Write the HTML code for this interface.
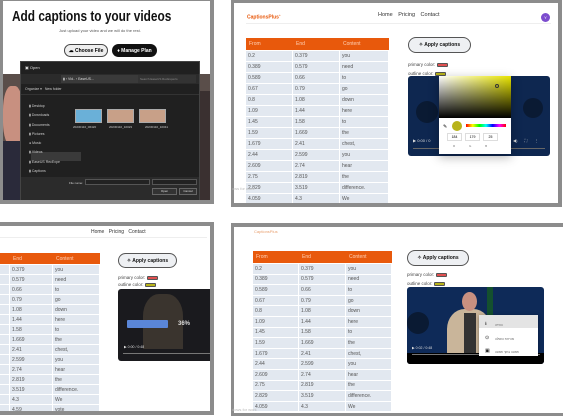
<!DOCTYPE html>
<html><head><meta charset="utf-8"><style>
*{margin:0;padding:0;box-sizing:border-box}
body{width:563px;height:416px;background:#fff;position:relative;overflow:hidden;font-family:"Liberation Sans",sans-serif}
.a{position:absolute}
.frame{position:absolute;border:3px solid #8c8c8c;background:#fff;overflow:hidden}
table{border-collapse:separate;border-spacing:1px;position:absolute;font-size:5px;color:#555}
td{background:#e2e8f0;padding-left:2px;vertical-align:middle}
th{background:#e8590c;color:#ffd2b8;text-align:left;font-weight:normal;padding-left:3px;box-shadow:1px 0 0 #e8590c}
.btn{position:absolute;border:1px solid #555;border-radius:9px;background:#eef0f3;font-size:5px;font-weight:bold;color:#111;display:flex;align-items:center;justify-content:center;gap:3px}
.lbl{position:absolute;font-size:4.5px;color:#444}
.sw{display:inline-block;width:11px;height:4px;border:1px solid #555;border-radius:1px;vertical-align:middle}
</style></head><body>

<!-- Panel 1 -->
<div class="frame" style="left:0;top:-2px;width:214px;height:206px;border-width:3px 4px 4px 3px">
 <div class="a" style="left:0;top:0;width:210px;height:70px;background:#fff"></div>
 <div class="a" style="left:9px;top:7px;font-size:15px;font-weight:bold;color:#111;white-space:nowrap;transform:scaleX(0.79);transform-origin:0 0">Add captions to your videos</div>
 <div class="a" style="left:56px;top:27px;font-size:4px;color:#555">Just upload your video and we will do the rest.</div>
 <div class="a" style="left:61px;top:43px;width:44px;height:13px;border:1px solid #444;border-radius:7px;background:#eee;font-size:5px;font-weight:bold;display:flex;align-items:center;justify-content:center">☁ Choose File</div>
 <div class="a" style="left:109px;top:43px;width:45px;height:13px;border-radius:7px;background:#111;color:#fff;font-size:5px;font-weight:bold;display:flex;align-items:center;justify-content:center">♦ Manage Plan</div>
 <div class="a" style="left:0;top:73px;width:210px;height:130px;background:#5a4e4a"></div>
 <div class="a" style="left:0;top:85px;width:20px;height:60px;background:#c89080;border-radius:40%"></div>
 <div class="a" style="left:0;top:140px;width:20px;height:60px;background:#2a2a3a"></div>
 <div class="a" style="left:190px;top:90px;width:20px;height:110px;background:#3a3030"></div>
 <div class="a" style="left:17px;top:60px;width:180px;height:139px;background:#202020;border:1px solid #444">
  <div class="a" style="left:4px;top:3px;font-size:4px;color:#ddd">▣ Open</div>
  <div class="a" style="left:0;top:12px;width:178px;height:10px;background:#2b2b2b"></div>
  <div class="a" style="left:40px;top:13px;width:80px;height:8px;background:#3a3a3a;font-size:3.5px;color:#ddd;padding:2px">▮ › Vid.. › EaseUS...</div>
  <div class="a" style="left:117px;top:13px;width:58px;height:8px;background:#333;font-size:3px;color:#888;padding:2px">Search EaseUS RecExperts</div>
  <div class="a" style="left:4px;top:25px;font-size:3.5px;color:#ccc">Organize ▾ &nbsp; New folder</div>
  <div class="a" style="left:0;top:32px;width:178px;height:1px;background:#333"></div>
  <div class="a" style="left:10px;top:90px;width:50px;height:9px;background:#3a3a3a"></div>
  <div class="a" style="left:8px;top:40px;font-size:3.5px;color:#ccc;line-height:9.3px">▮ Desktop<br>▮ Downloads<br>▮ Documents<br>▮ Pictures<br>● Music<br>▮ Videos<br>▮ EaseUS RecExpe<br>▮ Captions</div>
  <div class="a" style="left:54px;top:47px;width:27px;height:14px;background:#6ab0d8;border:1px solid #aaa"></div>
  <div class="a" style="left:86px;top:47px;width:27px;height:14px;background:#c8a088;border:1px solid #aaa"></div>
  <div class="a" style="left:118px;top:47px;width:27px;height:14px;background:#c8a088;border:1px solid #aaa"></div>
  <div class="a" style="left:52px;top:63px;font-size:3px;color:#ccc;width:100px;word-spacing:12px">20230110_06420 20230110_10023 20230110_10041</div>
  <div class="a" style="left:0;top:115px;width:178px;height:23px;background:#2b2b2b"></div>
  <div class="a" style="left:48px;top:119px;font-size:3px;color:#ccc">File name:</div>
  <div class="a" style="left:64px;top:117px;width:65px;height:6px;background:#222;border:1px solid #555"></div>
  <div class="a" style="left:131px;top:117px;width:45px;height:6px;background:#222;border:1px solid #555"></div>
  <div class="a" style="left:131px;top:126px;width:25px;height:7px;background:#333;border:1px solid #666;font-size:3px;color:#ddd;text-align:center">Open</div>
  <div class="a" style="left:158px;top:126px;width:18px;height:7px;background:#333;border:1px solid #666;font-size:3px;color:#ddd;text-align:center">Cancel</div>
 </div>
</div>

<!-- Panel 2 -->
<div class="frame" style="left:231px;top:-1px;width:331px;height:208px;border-width:4px 4px 4px 3px">
 <div class="a" style="left:13px;top:10px;font-size:5px;font-weight:bold;color:#e8590c">CaptionsPlus<sup style="font-size:3px">+</sup></div>
 <div class="a" style="left:144px;top:9px;font-size:5.5px;color:#333;word-spacing:4px">Home Pricing Contact</div>
 <div class="a" style="left:307px;top:10px;width:9px;height:9px;border-radius:50%;background:#7c4dce;color:#fff;font-size:4px;text-align:center;line-height:9px">Y</div>
 <div class="a" style="left:12px;top:20px;width:305px;height:1px;background:#eee"></div>
 <table style="left:11px;top:34px;width:144px">
  <tr style="height:12px"><th style="width:46px">From</th><th style="width:46px">End</th><th>Content</th></tr>
  <tr style="height:10px"><td>0.2</td><td>0.379</td><td>you</td></tr>
  <tr style="height:10px"><td>0.389</td><td>0.579</td><td>need</td></tr>
  <tr style="height:10px"><td>0.589</td><td>0.66</td><td>to</td></tr>
  <tr style="height:10px"><td>0.67</td><td>0.79</td><td>go</td></tr>
  <tr style="height:10px"><td>0.8</td><td>1.08</td><td>down</td></tr>
  <tr style="height:10px"><td>1.09</td><td>1.44</td><td>here</td></tr>
  <tr style="height:10px"><td>1.45</td><td>1.58</td><td>to</td></tr>
  <tr style="height:10px"><td>1.59</td><td>1.669</td><td>the</td></tr>
  <tr style="height:10px"><td>1.679</td><td>2.41</td><td>chest,</td></tr>
  <tr style="height:10px"><td>2.44</td><td>2.599</td><td>you</td></tr>
  <tr style="height:10px"><td>2.609</td><td>2.74</td><td>hear</td></tr>
  <tr style="height:10px"><td>2.75</td><td>2.819</td><td>the</td></tr>
  <tr style="height:10px"><td>2.829</td><td>3.519</td><td>difference.</td></tr>
  <tr style="height:10px"><td>4.059</td><td>4.3</td><td>We</td></tr>
 </table>
 <div class="btn" style="left:174px;top:34px;width:63px;height:16px">✧ Apply captions</div>
 <div class="lbl" style="left:174px;top:59px">primary color: <span class="sw" style="background:#e05050"></span></div>
 <div class="lbl" style="left:174px;top:68px">outline color: <span class="sw" style="background:#b8b31a"></span></div>
 <div class="a" style="left:174px;top:73px;width:142px;height:80px;background:#0e2750;border-radius:3px;overflow:hidden">
  <div class="a" style="left:8px;top:25px;width:22px;height:22px;border-radius:50%;background:#0a1a33"></div>
  <div class="a" style="left:115px;top:22px;width:20px;height:20px;border-radius:50%;background:#0a1a33"></div>
  <div class="a" style="left:5px;top:72px;width:132px;height:1px;background:#666"></div>
  <div class="a" style="left:5px;top:62px;font-size:4px;color:#ddd">▶ 0:00 / 0</div>
  <div class="a" style="left:105px;top:62px;font-size:4px;color:#ddd;word-spacing:6px">◀) ⛶ ⋮</div>
 </div>
 <div class="a" style="left:205px;top:73px;width:72px;height:78px;background:#fff;box-shadow:0 3px 10px rgba(0,0,0,.3)">
  <div class="a" style="left:0;top:0;width:72px;height:42px;background:linear-gradient(to bottom,rgba(0,0,0,0),#000),linear-gradient(to right,#fff,#e8e400)"></div>
  <div class="a" style="left:56px;top:8px;width:4px;height:4px;border:1px solid #333;border-radius:50%"></div>
  <div class="a" style="left:4px;top:48px;font-size:5px">✎</div>
  <div class="a" style="left:13px;top:45px;width:10px;height:10px;border-radius:50%;background:#b8b31a"></div>
  <div class="a" style="left:27px;top:48px;width:40px;height:3px;background:linear-gradient(to right,red,#ff0,lime,cyan,blue,#f0f,red)"></div>
  <div class="a" style="left:8px;top:57px;width:15px;height:8px;border:1px solid #ddd;font-size:3.5px;text-align:center;line-height:7px">184</div>
  <div class="a" style="left:26px;top:57px;width:15px;height:8px;border:1px solid #ddd;font-size:3.5px;text-align:center;line-height:7px">179</div>
  <div class="a" style="left:44px;top:57px;width:15px;height:8px;border:1px solid #ddd;font-size:3.5px;text-align:center;line-height:7px">25</div>
  <div class="a" style="left:14px;top:68px;font-size:3px;color:#777;word-spacing:13px">R G B</div>
 </div>
</div>

<!-- Panel 3 -->
<div class="frame" style="left:-3px;top:222px;width:217px;height:193px;border-width:4px 4px 4px 0">
 <div class="a" style="left:94px;top:3px;font-size:5px;color:#333;word-spacing:3px">Home Pricing Contact</div>
 <div class="a" style="left:0;top:11px;width:210px;height:1px;background:#eee"></div>
 <table style="left:-1px;top:26px;width:104px">
  <tr style="height:11px"><th style="width:12px"></th><th style="width:42px">End</th><th>Content</th></tr>
  <tr style="height:9px"><td></td><td>0.379</td><td>you</td></tr>
  <tr style="height:9px"><td></td><td>0.579</td><td>need</td></tr>
  <tr style="height:9px"><td></td><td>0.66</td><td>to</td></tr>
  <tr style="height:9px"><td></td><td>0.79</td><td>go</td></tr>
  <tr style="height:9px"><td></td><td>1.08</td><td>down</td></tr>
  <tr style="height:9px"><td></td><td>1.44</td><td>here</td></tr>
  <tr style="height:9px"><td></td><td>1.58</td><td>to</td></tr>
  <tr style="height:9px"><td></td><td>1.669</td><td>the</td></tr>
  <tr style="height:9px"><td></td><td>2.41</td><td>chest,</td></tr>
  <tr style="height:9px"><td></td><td>2.599</td><td>you</td></tr>
  <tr style="height:9px"><td></td><td>2.74</td><td>hear</td></tr>
  <tr style="height:9px"><td></td><td>2.819</td><td>the</td></tr>
  <tr style="height:9px"><td></td><td>3.519</td><td>difference.</td></tr>
  <tr style="height:9px"><td></td><td>4.3</td><td>We</td></tr>
  <tr style="height:9px"><td></td><td>4.59</td><td>vote</td></tr>
 </table>
 <div class="btn" style="left:121px;top:27px;width:59px;height:15px">✧ Apply captions</div>
 <div class="lbl" style="left:121px;top:49px">primary color: <span class="sw" style="background:#e05050"></span></div>
 <div class="lbl" style="left:121px;top:56px">outline color: <span class="sw" style="background:#b8b31a"></span></div>
 <div class="a" style="left:121px;top:63px;width:95px;height:72px;background:#1a1a1e;border-radius:3px;overflow:hidden">
  <div class="a" style="left:25px;top:5px;width:40px;height:55px;background:#3a342e;border-radius:40% 40% 0 0"></div>
  <div class="a" style="left:9px;top:31px;width:41px;height:8px;background:#5a86d8;border-radius:1px"></div>
  <div class="a" style="left:60px;top:32px;font-size:6px;font-weight:bold;color:#ddd">36%</div>
  <div class="a" style="left:6px;top:56px;font-size:3.5px;color:#ddd">▶ 0:00 / 0:48</div>
  <div class="a" style="left:5px;top:64px;width:90px;height:1px;background:#777"></div>
 </div>
</div>

<!-- Panel 4 -->
<div class="frame" style="left:231px;top:223px;width:332px;height:193px;border-width:4px 0 3px 3px">
 <div class="a" style="left:20px;top:2px;font-size:4px;color:#e8a070">CaptionsPlus</div>
 <table style="left:18px;top:23px;width:140px">
  <tr style="height:12px"><th style="width:45px">From</th><th style="width:46px">End</th><th>Content</th></tr>
  <tr style="height:9.6px"><td>0.2</td><td>0.379</td><td>you</td></tr>
  <tr style="height:9.6px"><td>0.389</td><td>0.579</td><td>need</td></tr>
  <tr style="height:9.6px"><td>0.589</td><td>0.66</td><td>to</td></tr>
  <tr style="height:9.6px"><td>0.67</td><td>0.79</td><td>go</td></tr>
  <tr style="height:9.6px"><td>0.8</td><td>1.08</td><td>down</td></tr>
  <tr style="height:9.6px"><td>1.09</td><td>1.44</td><td>here</td></tr>
  <tr style="height:9.6px"><td>1.45</td><td>1.58</td><td>to</td></tr>
  <tr style="height:9.6px"><td>1.59</td><td>1.669</td><td>the</td></tr>
  <tr style="height:9.6px"><td>1.679</td><td>2.41</td><td>chest,</td></tr>
  <tr style="height:9.6px"><td>2.44</td><td>2.599</td><td>you</td></tr>
  <tr style="height:9.6px"><td>2.609</td><td>2.74</td><td>hear</td></tr>
  <tr style="height:9.6px"><td>2.75</td><td>2.819</td><td>the</td></tr>
  <tr style="height:9.6px"><td>2.829</td><td>3.519</td><td>difference.</td></tr>
  <tr style="height:9.6px"><td>4.059</td><td>4.3</td><td>We</td></tr>
 </table>
 <div class="btn" style="left:173px;top:23px;width:62px;height:16px">✧ Apply captions</div>
 <div class="lbl" style="left:173px;top:45px">primary color: <span class="sw" style="background:#e05050"></span></div>
 <div class="lbl" style="left:173px;top:54px">outline color: <span class="sw" style="background:#b8b31a"></span></div>
 <div class="a" style="left:173px;top:60px;width:137px;height:77px;background:#0e2a58;border-radius:3px;overflow:hidden">
  <div class="a" style="left:80px;top:0;width:6px;height:60px;background:#14502e"></div>
  <div class="a" style="left:0;top:25px;width:22px;height:22px;border-radius:50%;background:#0a1a33"></div>
  <div class="a" style="left:40px;top:22px;width:44px;height:50px;background:#c9b59a;border-radius:40% 40% 0 0"></div>
  <div class="a" style="left:55px;top:5px;width:15px;height:19px;border-radius:50%;background:#c89080"></div>
  <div class="a" style="left:57px;top:26px;width:12px;height:40px;background:#333"></div>
  <div class="a" style="left:0;top:66px;width:137px;height:11px;background:#000"></div>
  <div class="a" style="left:5px;top:59px;font-size:3.5px;color:#ddd">▶ 0:02 / 0:48</div>
  <div class="a" style="left:5px;top:67px;width:128px;height:1px;background:#777"></div>
  <div class="a" style="left:72px;top:28px;width:59px;height:41px;background:#fff;box-shadow:0 1px 4px rgba(0,0,0,.4)">
   <div class="a" style="left:0;top:0;width:59px;height:13px;background:#e4e4e4"></div>
   <div class="a" style="left:6px;top:3px;font-size:5px;line-height:13.5px;color:#222">⭳<br>⊙<br>▣</div>
   <div class="a" style="left:16px;top:4px;font-size:3px;line-height:13.5px;color:#555">הורדה<br>מהירות הפעלה<br>תמונה בתוך תמונה</div>
  </div>
 </div>
</div>
<div class="a" style="left:232px;top:186px;font-size:4px;color:#bbb">ows for work</div>
<div class="a" style="left:232px;top:407px;font-size:4px;color:#bbb">dows for work</div>
</body></html>
